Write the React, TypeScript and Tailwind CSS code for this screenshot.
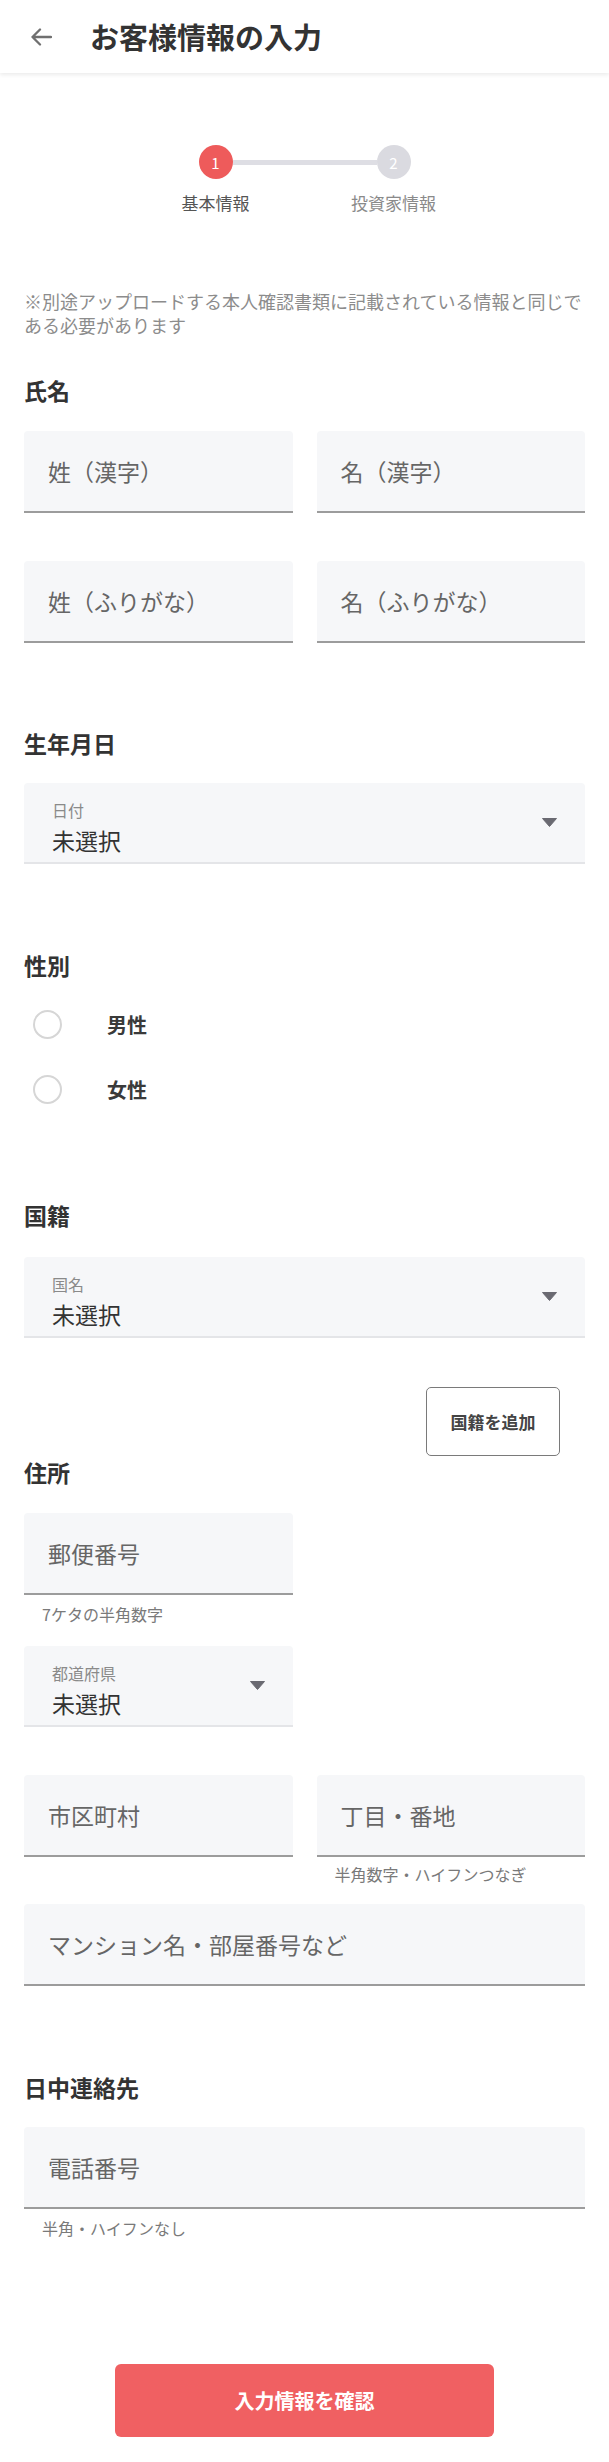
import React from "react";

const FONT = "font-['Noto_Sans_CJK_JP','Noto_Sans',sans-serif]";

function TextInput({ placeholder }: { placeholder: string }) {
  return (
    <div className="h-[82px] bg-[#f6f7f9] rounded-t-[4px] border-b-2 border-[#9c9c9c] flex items-center px-6 text-[23px] text-[#666] leading-none">
      {placeholder}
    </div>
  );
}

function Triangle() {
  return (
    <svg width="15" height="9" viewBox="0 0 15 9" className="self-center shrink-0">
      <polygon points="0.5,0.5 14.5,0.5 7.5,8.5" fill="#6a6a72" stroke="#6a6a72" strokeLinejoin="round" strokeWidth="1" />
    </svg>
  );
}

function Select({ label }: { label: string }) {
  return (
    <div className="h-[81px] bg-[#f6f7f9] rounded-t-[4px] border-b-2 border-[#e4e5e8] flex justify-between pl-[28px] pr-[28px]">
      <div className="pt-[17px] flex flex-col">
        <div className="text-[16px] leading-[20px] text-[#8a8a8a]">{label}</div>
        <div className="mt-[5px] text-[23px] leading-[30px] text-[#333]">未選択</div>
      </div>
      <Triangle />
    </div>
  );
}

function SectionLabel({ children, className = "" }: { children: React.ReactNode; className?: string }) {
  return (
    <div className={`h-[30px] text-[23px] leading-[30px] font-bold text-[#333] ${className}`}>{children}</div>
  );
}

function Helper({ children, className = "" }: { children: React.ReactNode; className?: string }) {
  return <div className={`pl-[18px] text-[16px] leading-[20px] text-[#7a7a7a] ${className}`}>{children}</div>;
}

function Radio({ label }: { label: string }) {
  return (
    <div className="h-[65px] flex items-center">
      <div className="ml-[9px] w-[29px] h-[29px] rounded-full border-2 border-[#d6d6d6] bg-white" />
      <div className="ml-[45px] text-[20px] font-bold text-[#3a3a3a] leading-none">{label}</div>
    </div>
  );
}

export default function App() {
  return (
    <div className={`${FONT} w-[609px] bg-white min-h-[2462px]`}>
      {/* Header */}
      <div className="relative z-10 h-[73px] flex items-center pl-[30px] bg-white shadow-[0_2px_4px_rgba(0,0,0,0.08)]">
        <svg width="22" height="18" viewBox="0 0 22 18" fill="none">
          <path d="M21 9H2.5M10 1.5L2.5 9L10 16.5" stroke="#707070" strokeWidth="2.3" strokeLinecap="round" strokeLinejoin="round" />
        </svg>
        <div className="ml-[38px] text-[29px] font-bold text-[#333] leading-none">お客様情報の入力</div>
      </div>

      {/* Stepper */}
      <div className="mt-[72px]">
        <div className="flex justify-center items-center">
          <div className="w-[34px] h-[34px] rounded-full bg-[#ee5b5b] flex items-center justify-center text-white text-[15px] leading-none">1</div>
          <div className="w-[144px] h-[5px] bg-[#dedee4]" />
          <div className="w-[34px] h-[34px] rounded-full bg-[#dadae0] flex items-center justify-center text-white text-[15px] leading-none">2</div>
        </div>
        <div className="mt-[12px] flex justify-center">
          <div className="w-[178px] text-center text-[17px] leading-[24px] text-[#555]">基本情報</div>
          <div className="w-[178px] text-center text-[17px] leading-[24px] text-[#8a8a8a]">投資家情報</div>
        </div>
      </div>

      <div className="px-6 flex flex-col">
        <p className="mt-[74px] text-[18px] leading-[24px] text-[#8c8c8c]">
          ※別途アップロードする本人確認書類に記載されている情報と同じである必要があります
        </p>

        <SectionLabel className="mt-[38px]">氏名</SectionLabel>
        <div className="mt-[26px] grid grid-cols-2 gap-6">
          <TextInput placeholder="姓（漢字）" />
          <TextInput placeholder="名（漢字）" />
        </div>
        <div className="mt-[48px] grid grid-cols-2 gap-6">
          <TextInput placeholder="姓（ふりがな）" />
          <TextInput placeholder="名（ふりがな）" />
        </div>

        <SectionLabel className="mt-[85px]">生年月日</SectionLabel>
        <div className="mt-[25px]">
          <Select label="日付" />
        </div>

        <SectionLabel className="mt-[86px]">性別</SectionLabel>
        <div className="mt-[12px] flex flex-col">
          <Radio label="男性" />
          <Radio label="女性" />
        </div>

        <SectionLabel className="mt-[78px]">国籍</SectionLabel>
        <div className="mt-[27px]">
          <Select label="国名" />
        </div>
        <button className="mt-[49px] self-end mr-[25px] w-[134px] h-[69px] rounded-[5px] border-[1.5px] border-[#7a7a7a] bg-white text-[17px] font-bold text-[#444] leading-none">
          国籍を追加
        </button>

        <SectionLabel className="mt-[1px]">住所</SectionLabel>
        <div className="mt-[26px] grid grid-cols-2 gap-6">
          <TextInput placeholder="郵便番号" />
        </div>
        <Helper className="mt-[9px]">7ケタの半角数字</Helper>
        <div className="mt-[22px] grid grid-cols-2 gap-6">
          <Select label="都道府県" />
        </div>
        <div className="mt-[48px] grid grid-cols-2 gap-x-6">
          <TextInput placeholder="市区町村" />
          <TextInput placeholder="丁目・番地" />
          <div />
          <Helper className="mt-[7px]">半角数字・ハイフンつなぎ</Helper>
        </div>
        <div className="mt-[20px]">
          <TextInput placeholder="マンション名・部屋番号など" />
        </div>

        <SectionLabel className="mt-[86px]">日中連絡先</SectionLabel>
        <div className="mt-[25px]">
          <TextInput placeholder="電話番号" />
        </div>
        <Helper className="mt-[9px]">半角・ハイフンなし</Helper>

        <button className="mt-[126px] mb-[25px] self-center w-[379px] h-[73px] rounded-[6px] bg-[#f06062] text-white text-[20px] font-bold leading-none">
          入力情報を確認
        </button>
      </div>
    </div>
  );
}
